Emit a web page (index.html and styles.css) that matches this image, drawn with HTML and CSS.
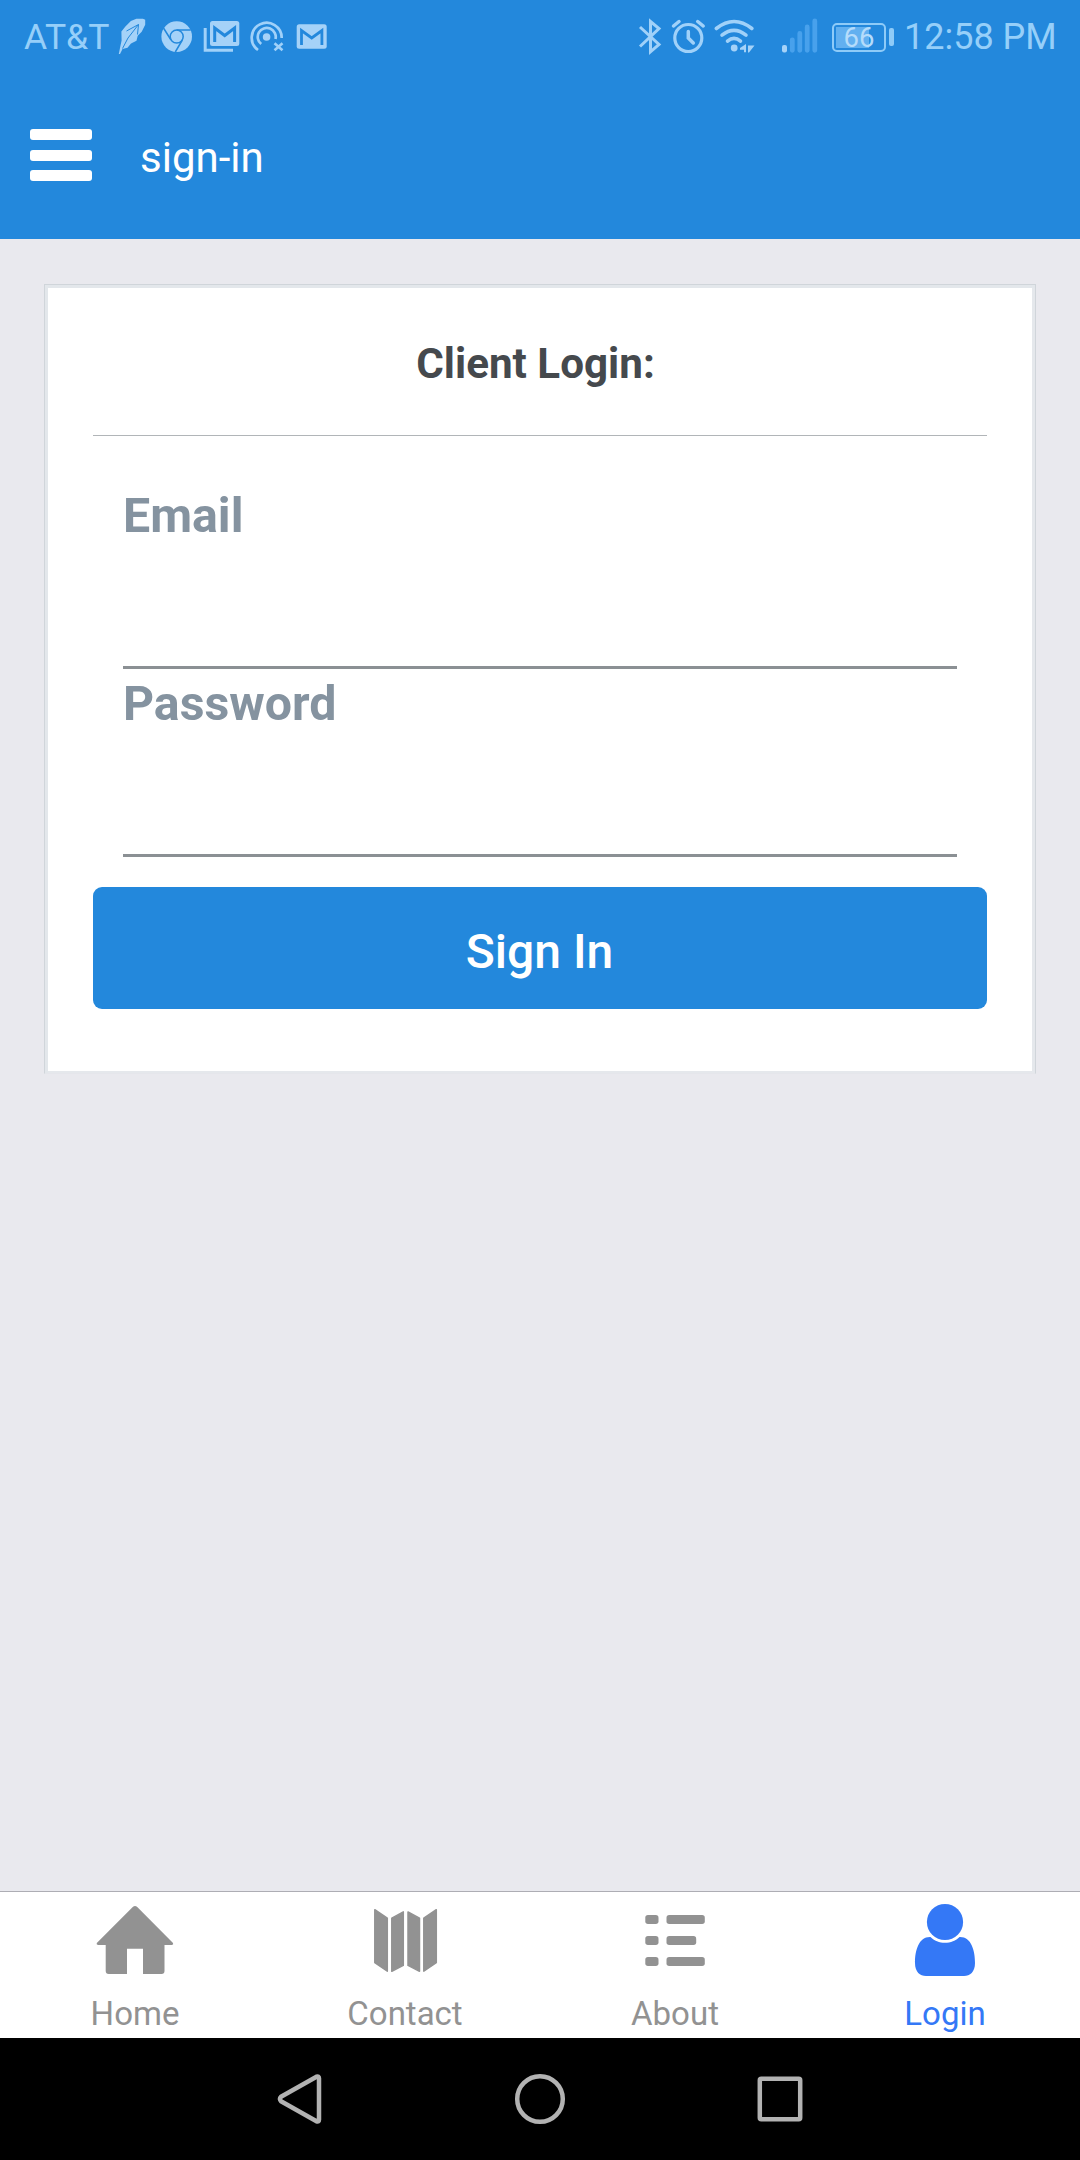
FILE: index.html
```html
<!DOCTYPE html>
<html lang="en">
<head>
<meta charset="utf-8">
<title>sign-in</title>
<link rel="stylesheet" href="styles.css">
</head>
<body>
<div class="app">
  <div class="status">
    <span class="carrier">AT&amp;T</span>
    <svg class="st" width="36" height="74" viewBox="118 0 36 74">
      <path class="f" d="M118.8 54l1.600-8 1.200-5.500-.2-9 4-5 5.500-5.500 5.500-2.200h6.500l2.300 1v5l-3.500 7-4 4-1.200 5-5.500 2.800-3.500 4.200-5 1.200-2.500 5z"/>
      <path d="M122.500 48.500L128 38l10.500-13.500M126.500 31l12-6.500-1 10" fill="none" stroke="#2388dc" stroke-width="1"/>
    </svg>
    <svg class="st" width="46" height="74" viewBox="154 0 46 74">
      <circle class="f" cx="176.700" cy="36.600" r="15.300"/>
      <circle cx="176.700" cy="36.600" r="6.500" fill="none" stroke="#2388dc" stroke-width="1.500"/>
      <path d="M176.700 30h14M171 40l-7.500-12M182.300 40l-7 12" fill="none" stroke="#2388dc" stroke-width="1.500"/>
    </svg>
    <svg class="st" width="46" height="74" viewBox="200 0 46 74">
      <rect class="f" x="210" y="21" width="29.300" height="25" rx="2.500"/>
      <path d="M214.700 42V28l10 7.500L234.600 28v14" fill="none" stroke="#2388dc" stroke-width="3"/>
      <path class="l" d="M205.200 28v22.300H233" stroke-width="3"/>
    </svg>
    <svg class="st" width="46" height="74" viewBox="246 0 46 74">
      <circle class="f" cx="266.600" cy="37" r="3.800"/>
      <path class="l" d="M258 50a15 15 0 1 1 23.700-12M261.200 44a9 9 0 1 1 14.300-5" stroke-width="2.700"/>
      <path class="l" d="M274.500 43.200l8 7M282.500 43.200l-8 7" stroke-width="2.600"/>
    </svg>
    <svg class="st" width="40" height="74" viewBox="292 0 40 74">
      <rect class="f" x="296.700" y="24.300" width="30" height="24.500" rx="2.500"/>
      <path d="M301.500 45V30.500l10.200 7.500L321.900 30.500V45" fill="none" stroke="#2388dc" stroke-width="2.800"/>
    </svg>
    <div class="spacer"></div>
    <svg class="st" width="30" height="74" viewBox="636 0 30 74">
      <path class="l" d="M640 27l19 17.500-8.500 7.300V21.500l8.500 7L640 46.500" stroke-width="3"/>
    </svg>
    <svg class="st" width="43" height="74" viewBox="666 0 43 74">
      <circle class="l" cx="688.300" cy="38" r="13.500" stroke-width="3.200"/>
      <path class="l" d="M688.300 31.500v6.500l5 5M673.500 26l5.500-4.500M703.200 26l-5.500-4.500" stroke-width="3.500" stroke-linecap="round"/>
    </svg>
    <svg class="st" width="57" height="74" viewBox="709 0 57 74">
      <path class="l" d="M716.300 28.500q17.800-14 35.600 0M722 35.200q12-9.500 24 0M727.500 41.200q6.500-5.500 13 0" stroke-width="3.600" stroke-linecap="round"/>
      <circle class="f" cx="734.200" cy="48" r="3.400"/>
      <path class="f" d="M746 44v8.300h-2v-2.600h-4V48zM748 45.500h6.500l-5.500 7h-1z"/>
    </svg>
    <svg class="st" width="62" height="74" viewBox="766 0 62 74">
      <rect class="f" x="782" y="45" width="5" height="7.500" rx="2"/>
      <path d="M792.300 39.800v10.500M799.800 33.500v16.800M807.200 27v23.300M814.800 21v29.300" stroke="#48a1ec" stroke-width="4.800" stroke-linecap="round"/>
    </svg>
    <div class="battery"><span>66</span></div>
    <div class="nub"></div>
    <span class="clock">12:58 PM</span>
  </div>
  <header class="bar">
    <div class="menu"><i></i><i></i><i></i></div>
    <span class="title">sign-in</span>
  </header>
  <main class="main">
    <form class="card">
      <h1 class="heading">Client Login:</h1>
      <div class="fields">
        <label class="field">Email<input type="email"></label>
        <label class="field">Password<input type="password"></label>
      </div>
      <button class="submit" type="button">Sign In</button>
    </form>
  </main>
  <nav class="tabs">
    <a class="tab">
      <svg width="120" height="104" viewBox="75 1892 120 104">
        <path fill="currentColor" d="M133 1906.700q2-1.400 4 0l36 36.300q.8 1.700-1 1.900h-7.500V1971q0 3-3 3H143v-25.200h-16V1974h-18.300q-3 0-3-3v-26.100H98q-2-.2-1.200-1.900z"/>
      </svg>
      <span>Home</span>
    </a>
    <a class="tab">
      <svg width="120" height="104" viewBox="345 1892 120 104">
        <path fill="currentColor" stroke="currentColor" stroke-width="1.500" stroke-linejoin="round" d="M374.800 1909.700l12.500 8.500v53l-12.500-8.500zM391.800 1918.200l11.500-6.300v53.500l-11.500 5.900zM408 1911.900l11.500 6.300v53.100l-11.500-5.900zM423.800 1918.200l12.500-8.500v53l-12.500 8.500z"/>
      </svg>
      <span>Contact</span>
    </a>
    <a class="tab">
      <svg width="120" height="104" viewBox="615 1892 120 104">
        <g fill="currentColor">
          <rect x="645.300" y="1915" width="13.200" height="9" rx="2.700"/><rect x="666.500" y="1915" width="38.300" height="9" rx="2.700"/>
          <rect x="645.300" y="1936" width="13.200" height="9" rx="2.700"/><rect x="666.500" y="1936" width="29.700" height="9" rx="2.700"/>
          <rect x="645.300" y="1957" width="13.200" height="9" rx="2.700"/><rect x="666.500" y="1957" width="38.300" height="9" rx="2.700"/>
        </g>
      </svg>
      <span>About</span>
    </a>
    <a class="tab active">
      <svg width="120" height="104" viewBox="885 1892 120 104">
        <circle fill="currentColor" cx="945" cy="1922" r="18.100"/>
        <path fill="currentColor" d="M930.500 1937c7 7.700 22 7.700 29 0 11.500-.5 15.500 13 15.500 26 0 9-5 13-11 13h-38c-6 0-11-4-11-13 0-13 4-26.500 15.500-26z"/>
      </svg>
      <span>Login</span>
    </a>
  </nav>
  <div class="sysnav">
    <svg width="60" height="60" viewBox="270 2069 60 60"><path d="M281 2096.800q-2 2.200 0 4.400L316.500 2121.300q2.500 1 2.500-1.500v-41.600q0-2.500-2.500-1.500z"/></svg>
    <svg width="60" height="60" viewBox="510 2069 60 60"><circle cx="540" cy="2099" r="22.800"/></svg>
    <svg width="60" height="60" viewBox="750 2069 60 60"><rect x="759.800" y="2078.800" width="40.400" height="40.400" rx="1.500"/></svg>
  </div>
</div>
</body>
</html>
```

FILE: styles.css
```css
* { box-sizing: border-box; }
body { margin: 0; font-family: Roboto, sans-serif; }
.app { width: 1080px; height: 2160px; display: flex; flex-direction: column; background: #e9e9ee; }

.status { height: 74px; display: flex; align-items: center; padding: 0 25px 0 24px; background: #2388dc; color: #96cff9; font-size: 36px; line-height: 76px; white-space: nowrap; }
.st { flex: none; display: block; }
.f { fill: #a5d2f8; }
.l { fill: none; stroke: #a0d1f9; }
.carrier { width: 94px; font-size: 35.5px; }
.spacer { flex: 1; }
.battery { width: 54px; height: 29px; margin-left: 4px; border: 2px solid #8ecbf8; border-radius: 5px; background: linear-gradient(#62b0f0, #62b0f0) 2px 2px / 33px 21px no-repeat; color: #b5dcfb; font-size: 27.500px; line-height: 25px; text-align: center; }
.nub { width: 5px; height: 18px; margin: 0 10px 0 3px; border-radius: 2px; background: #8ecbf8; }
.clock { width: 151px; }

.bar { height: 165px; display: flex; align-items: flex-start; padding: 55px 30px 0; gap: 48px; background: #2388dc; }
.menu { width: 62px; display: grid; gap: 9.700px; }
.menu i { height: 11px; border-radius: 3px; background: #fff; }
.title { color: #fff; font-size: 42px; line-height: 57px; }

.main { flex: 1; padding: 45px 44px 0; }
.card { height: 790px; padding: 3px 48px 0; border: 1px solid #d0d5da; border-bottom-color: #e5e6eb; background: #fff; box-shadow: inset 3px 3px #e3e7eb, inset -3px -2px #e5e8ec; }
.heading { height: 148px; margin: 0; padding: 46px 9px 0 0; border-bottom: 1px solid #b1b5b8; color: #45494d; font-size: 42.200px; line-height: 60px; text-align: center; }
.fields { padding: 45px 30px 0; }
.field { display: block; height: 188px; color: #8593a0; font-size: 48.300px; font-weight: 700; line-height: 70px; }
.field input { display: block; width: 100%; height: 118px; padding: 0; border: 0; border-bottom: 3px solid #8b9094; outline: 0; background: transparent; font: 400 42px Roboto, sans-serif; }
.submit { display: block; width: 100%; height: 122px; margin-top: 30px; padding: 7px 1px 0 0; border: 0; border-radius: 9px; background: #2388dc; color: #fff; font: 500 48px/60px Roboto, sans-serif; }

.tabs { height: 147px; display: grid; grid-template-columns: repeat(4, 1fr); border-top: 1px solid #adadb4; background: #fff; }
.tab { display: flex; flex-direction: column; align-items: center; color: #929292; font-size: 33px; line-height: 36px; }
.tab svg { display: block; flex: none; }
.active { color: #3478f6; }

.sysnav { height: 122px; display: flex; justify-content: center; align-items: center; gap: 180px; background: #000; }
.sysnav svg { fill: none; stroke: #b2b2b2; stroke-width: 4.500; stroke-linejoin: round; }
```
